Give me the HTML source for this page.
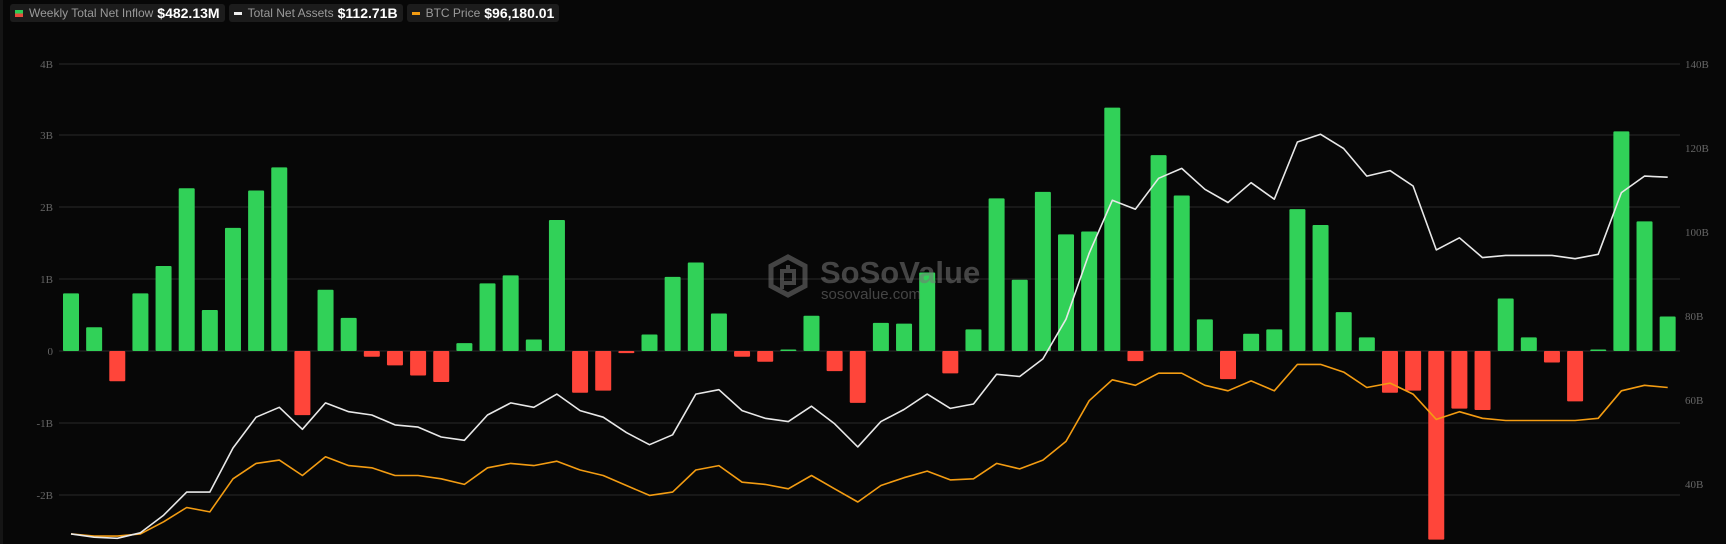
<!DOCTYPE html>
<html><head><meta charset="utf-8"><style>
body{margin:0;background:#070707;width:1726px;height:544px;overflow:hidden;font-family:"Liberation Sans",sans-serif;position:relative}
.legs{position:absolute;top:4px;left:10px;display:flex;gap:4px}
.leg{height:18px;background:#1c1c1c;border-radius:3px;display:flex;align-items:center;padding:0 5px;font-size:12px;color:#9a9a9a;white-space:nowrap}
.leg b{color:#fff;font-size:14px;margin-left:4px}
.sw{display:inline-block;width:8px;flex-shrink:0;margin-right:6px}
</style></head><body>
<div style="position:absolute;left:0;top:0;width:3px;height:544px;background:#151515"></div>
<div class="legs">
<div class="leg"><span class="sw" style="height:7px;background:linear-gradient(#2ecc55 50%,#e74c3c 50%)"></span>Weekly Total Net Inflow<b>$482.13M</b></div>
<div class="leg"><span class="sw" style="height:3px;background:#eee"></span>Total Net Assets<b>$112.71B</b></div>
<div class="leg"><span class="sw" style="height:3px;background:#f39c12"></span>BTC Price<b>$96,180.01</b></div>
</div>
<svg id="c" width="1726" height="544" style="position:absolute;left:0;top:0"></svg>
<script>
var s='';
var L=[['4B',64],['3B',135],['2B',207],['1B',279],['0',351],['-1B',423],['-2B',495]];
L.forEach(function(a){s+='<line x1="59" x2="1680" y1="'+a[1]+'" y2="'+a[1]+'" stroke="#2a2a2a" stroke-width="1"/>';s+='<text x="53" y="'+(a[1]+4)+'" text-anchor="end" font-family="Liberation Serif" font-size="11" fill="#666">'+a[0]+'</text>';});
[['140B',64],['120B',148],['100B',232],['80B',316],['60B',400],['40B',484]].forEach(function(a){s+='<text x="1685" y="'+(a[1]+4)+'" font-family="Liberation Serif" font-size="11" fill="#666">'+a[0]+'</text>';});
var v=[0.8,0.33,-0.42,0.8,1.18,2.26,0.57,1.71,2.23,2.55,-0.89,0.85,0.46,-0.08,-0.2,-0.34,-0.43,0.11,0.94,1.05,0.16,1.82,-0.58,-0.55,-0.03,0.23,1.03,1.23,0.52,-0.08,-0.15,0.02,0.49,-0.28,-0.72,0.39,0.38,1.09,-0.31,0.3,2.12,0.99,2.21,1.62,1.66,3.38,-0.14,2.72,2.16,0.44,-0.39,0.24,0.3,1.97,1.75,0.54,0.19,-0.58,-0.55,-2.62,-0.8,-0.82,0.73,0.19,-0.16,-0.7,0.02,3.05,1.8,0.48];
var X=function(i){return 71+i*23.14};
v.forEach(function(b,i){var h=Math.abs(b)*72,y=b>0?351-h:351;s+='<rect x="'+(X(i)-8)+'" y="'+y+'" width="16" height="'+Math.max(h,1.5)+'" rx="1" fill="'+(b>0?'#31d158':'#ff453a')+'"/>';});
var w=[485,488,489,484,468,447,447,407,379,370,390,366,374,377,386,388,397,400,377,366,370,358,373,379,393,404,395,358,354,373,380,383,369,385,406,383,372,358,371,367,340,342,326,290,230,182,190,162,153,172,184,166,181,129,122,135,160,155,169,227,216,234,232,232,232,235,231,175,160,161];
var o=[485,487,487,485,474,461,465,435,421,418,432,415,423,425,432,432,435,440,425,421,423,419,427,432,441,450,447,427,423,438,440,444,432,444,456,441,434,428,436,435,421,426,418,401,364,345,350,339,339,350,355,346,355,331,331,338,352,348,358,381,374,380,382,382,382,382,380,355,350,352];
function pl(a,c){return '<polyline fill="none" stroke="'+c+'" stroke-width="1.6" stroke-linejoin="round" points="'+a.map(function(y,i){return X(i).toFixed(1)+','+(y*1.1008).toFixed(1)}).join(' ')+'"/>';}
s+=pl(o,'#f39c12');s+=pl(w,'#e8e8e8');
s+='<g opacity="0.55" transform="translate(768,255)"><path d="M20 2 L37 11 L37 31 L20 40 L3 31 L3 11 Z" fill="none" stroke="#777" stroke-width="5"/><path d="M14 16 h12 v12 h-12 z M20 16 v-6 M14 28 v6" fill="none" stroke="#777" stroke-width="4"/>';
s+='<text x="52" y="28" font-family="Liberation Sans" font-weight="bold" font-size="31" fill="#777">SoSoValue</text><text x="53" y="44" font-family="Liberation Sans" font-size="15" fill="#777">sosovalue.com</text></g>';
document.getElementById('c').innerHTML=s;
</script>
</body></html>
